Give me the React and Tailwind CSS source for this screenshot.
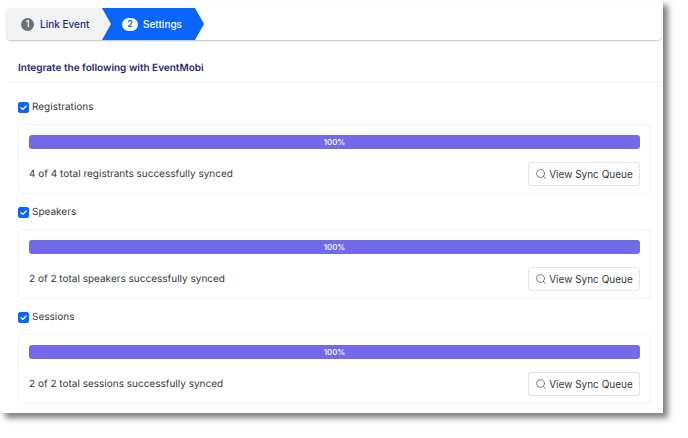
import { Search } from "lucide-react";

const groups = [
  { id: "registrations", label: "Registrations", status: "4 of 4 total registrants successfully synced", percent: 100 },
  { id: "speakers", label: "Speakers", status: "2 of 2 total speakers successfully synced", percent: 100 },
  { id: "sessions", label: "Sessions", status: "2 of 2 total sessions successfully synced", percent: 100 },
];

function Steps() {
  return (
    <nav
      aria-label="Setup steps"
      className="flex h-8 rounded-[4px] bg-white font-medium shadow-[0_1px_2px_rgba(0,0,0,0.25)]"
    >
      <button type="button" className="-mr-[9px] flex w-[104px] items-center rounded-l-[4px] bg-[#f1f3f5] pl-[14px] text-[#2a2870]">
        <span className="mr-[6px] flex h-[13px] w-[13px] items-center justify-center rounded-full bg-[#6f7072] text-[9px] text-white">1</span>
        Link Event
      </button>
      <button
        type="button"
        aria-current="step"
        className="flex w-[102px] items-center bg-[#0866ff] pl-5 text-white [clip-path:polygon(0_0,93px_0,100%_50%,93px_100%,0_100%,9px_50%)]"
      >
        <span className="mr-[5px] flex h-[13px] w-4 items-center justify-center rounded-full bg-white text-[9px] font-semibold text-[#0866ff]">2</span>
        Settings
      </button>
    </nav>
  );
}

function SyncGroup({ group }) {
  return (
    <section className="mb-3">
      <div className="flex h-3 items-center gap-[3px]">
        <span className="grid h-[11px] w-[11px]">
          <input
            id={group.id}
            type="checkbox"
            defaultChecked
            className="peer col-start-1 row-start-1 h-[11px] w-[11px] appearance-none rounded-[2px] border border-[#b8bdc4] bg-white checked:border-[#0866ff] checked:bg-[#0866ff]"
          />
          <svg
            viewBox="0 0 11 11"
            aria-hidden="true"
            className="pointer-events-none col-start-1 row-start-1 hidden h-[11px] w-[11px] fill-none stroke-white peer-checked:block"
          >
            <path d="M3 5.8 4.8 7.4 8.2 4" strokeWidth="1.3" strokeLinecap="round" strokeLinejoin="round" />
          </svg>
        </span>
        <label htmlFor={group.id}>{group.label}</label>
      </div>
      <div className="mt-[11px] rounded-[4px] border border-[#f3f3f5] px-[10px] pt-[10px] pb-[7px]">
        <div
          role="progressbar"
          aria-label={group.label + " sync progress"}
          aria-valuenow={group.percent}
          aria-valuemin={0}
          aria-valuemax={100}
          className="h-[14px] overflow-hidden rounded-[3px] bg-[#e9ecef]"
        >
          <div
            className="flex h-full items-center justify-center bg-[#726ae8] text-[8px] font-medium text-white"
            style={{ width: group.percent + "%" }}
          >
            {group.percent}%
          </div>
        </div>
        <div className="mt-[13px] flex items-start justify-between">
          <p className="mt-1 leading-4">{group.status}</p>
          <button
            type="button"
            className="flex h-6 w-28 items-center justify-center gap-[2px] rounded-[3px] border border-[#e2e4e6] bg-white whitespace-nowrap"
          >
            <Search aria-hidden="true" className="h-3 w-3 text-[#5c6268]" strokeWidth={1.6} />
            View Sync Queue
          </button>
        </div>
      </div>
    </section>
  );
}

export default function App() {
  return (
    <div className="min-h-screen bg-white pr-[25px] font-['Inter',sans-serif] text-[10px] text-[#343a40] [text-rendering:geometricPrecision]">
      <main className="bg-white pt-2 pb-[9px] pl-[7px] shadow-[5px_5px_6px_rgba(0,0,0,0.5)]">
        <div className="pr-[2px]">
          <Steps />
          <h1 className="mt-5 border-b border-[#f0f0f2] pb-[5px] pl-[11px] leading-4 font-semibold text-[#2a2870]">
            Integrate the following with EventMobi
          </h1>
        </div>
        <form className="mt-[19px] pr-3 pl-[11px] [&>section:last-child]:mb-0">
          {groups.map((group) => (
            <SyncGroup key={group.id} group={group} />
          ))}
        </form>
      </main>
    </div>
  );
}
